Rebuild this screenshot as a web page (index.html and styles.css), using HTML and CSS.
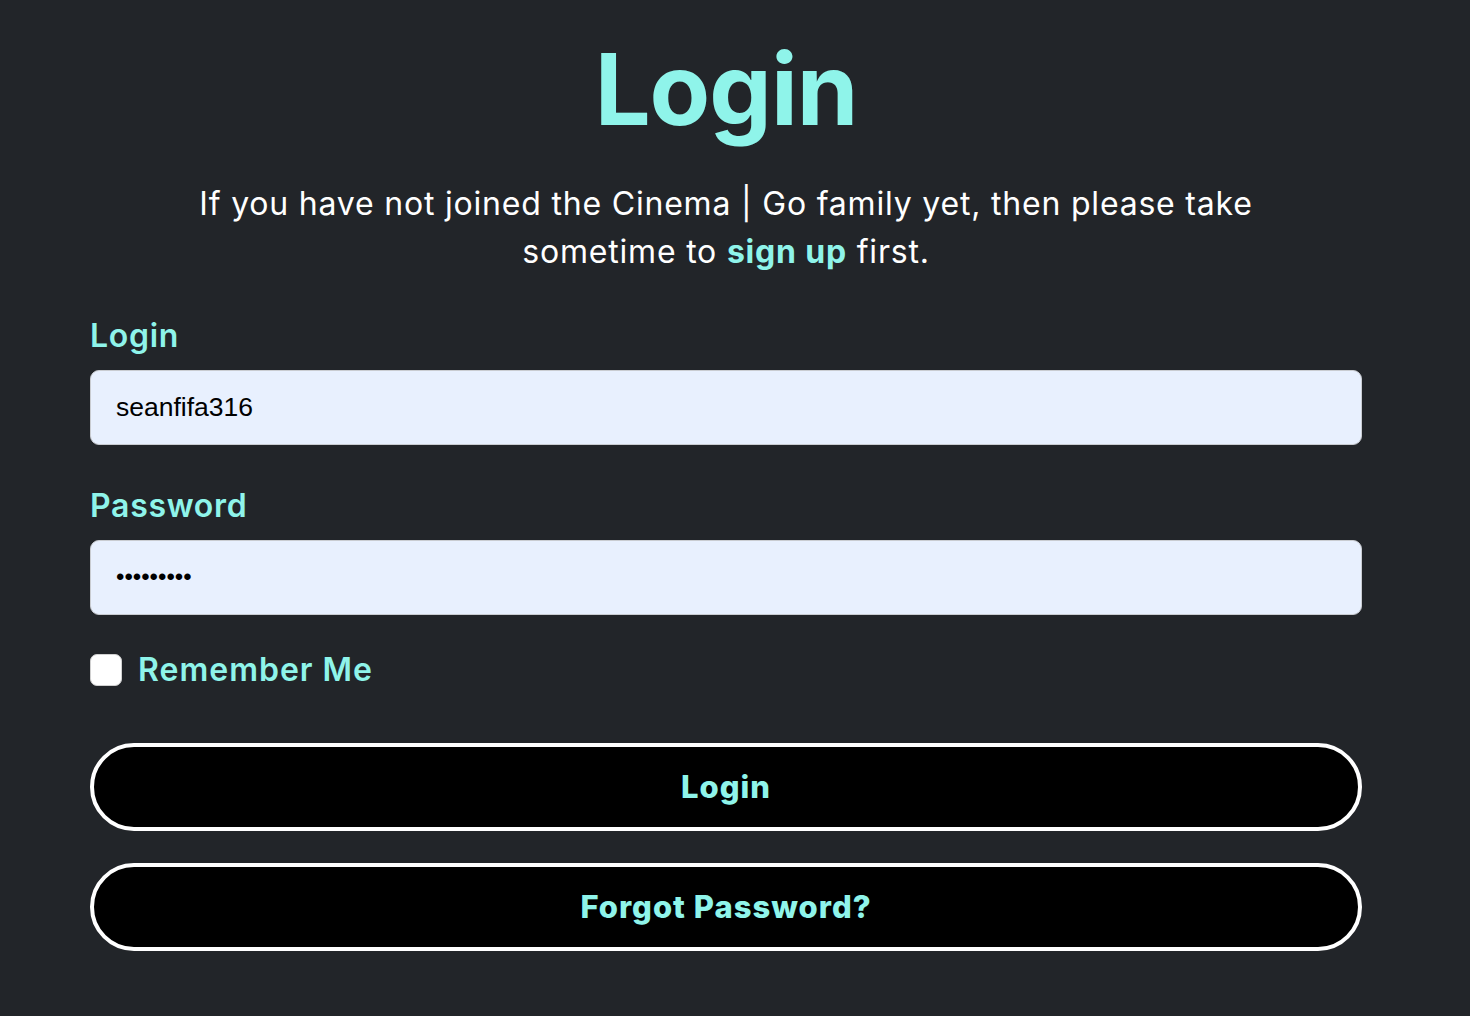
FILE: index.html
```html
<!DOCTYPE html>
<html lang="en">
<head>
<meta charset="utf-8">
<title>Login</title>
<link rel="stylesheet" href="styles.css">
</head>
<body>
<main class="page">
  <h1 class="title">Login</h1>
  <p class="intro">If you have not joined the Cinema | Go family yet, then please take sometime to <a class="link" href="#">sign up</a> first.</p>
  <form class="form">
    <label class="label" for="login">Login</label>
    <input class="field" id="login" type="text" value="seanfifa316">
    <label class="label" for="password">Password</label>
    <input class="field field-pass" id="password" type="password" value="password1">
    <div class="remember">
      <span class="box"></span>
      <span class="remember-text">Remember Me</span>
    </div>
    <button class="btn" type="button">Login</button>
    <button class="btn btn-second" type="button">Forgot Password?</button>
  </form>
</main>
</body>
</html>
```

FILE: styles.css
```css
html, body {
  margin: 0;
  padding: 0;
  background: #222529;
}
body {
  font-family: Inter, "Noto Sans", sans-serif;
  color: #ffffff;
}
.page {
  width: 1272px;
  margin-left: 90px;
  display: flex;
  flex-direction: column;
  align-items: center;
}
.title {
  margin: 30px 0 0;
  font-size: 99px;
  font-weight: 700;
  line-height: 1.2;
  color: #8ff4ea;
  letter-spacing: -1px;
}
.intro {
  margin: 31px 0 0;
  max-width: 1120px;
  text-align: center;
  font-size: 32px;
  line-height: 48px;
  font-weight: 400;
  letter-spacing: 0.8px;
}
.link {
  color: #8ff4ea;
  font-weight: 700;
  text-decoration: none;
}
.form {
  width: 100%;
  display: flex;
  flex-direction: column;
  margin-top: 40px;
}
.label {
  font-size: 32px;
  font-weight: 600;
  color: #8ff4ea;
  line-height: 40px;
  letter-spacing: 0.7px;
  margin-bottom: 14px;
}
.field {
  box-sizing: border-box;
  width: 100%;
  height: 75px;
  border: 1px solid #c9ccd1;
  border-radius: 9px;
  background: #e8f0fe;
  padding: 0 25px;
  font-family: "Liberation Sans", Arial, sans-serif;
  font-size: 26.5px;
  color: #000;
  margin-bottom: 41px;
  outline: none;
}
.field-pass {
  font-size: 24px;
  margin-bottom: 35px;
}
.remember {
  display: flex;
  align-items: center;
  gap: 16px;
}
.box {
  width: 32px;
  height: 32px;
  border-radius: 7px;
  background: #fff;
  box-sizing: border-box;
  border: 1px solid #d0d0d0;
}
.remember-text {
  font-size: 32px;
  font-weight: 600;
  color: #8ff4ea;
  line-height: 40px;
  letter-spacing: 1px;
}
.btn {
  box-sizing: border-box;
  width: 100%;
  height: 88px;
  border: 4px solid #ffffff;
  border-radius: 44px;
  background: #000;
  color: #8ff4ea;
  font-family: Inter, "Noto Sans", sans-serif;
  font-size: 31px;
  font-weight: 800;
  letter-spacing: 1px;
  margin-top: 53px;
  cursor: pointer;
}
.btn-second {
  margin-top: 32px;
}
```
